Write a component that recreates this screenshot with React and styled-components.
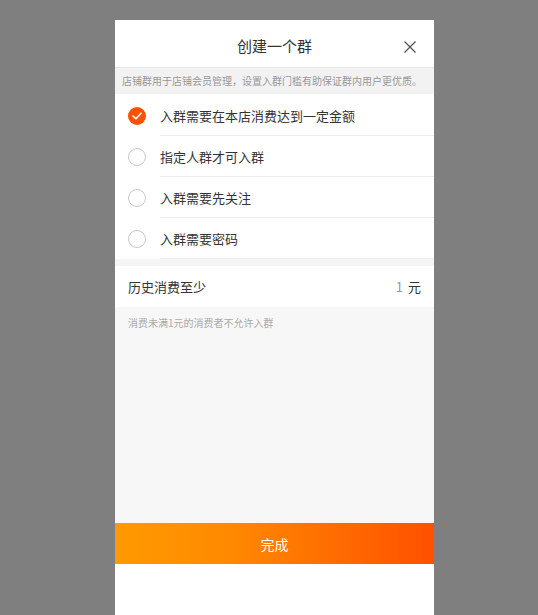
import React from "react";
import styled, { createGlobalStyle } from "styled-components";

const GlobalStyle = createGlobalStyle`
  html, body {
    margin: 0;
    padding: 0;
    background: #7f7f80;
    font-family: "Noto Sans CJK SC", "Noto Sans", sans-serif;
  }
`;

const Backdrop = styled.div`
  height: 615px;
  padding-top: 20px;
  padding-left: 115px;
  box-sizing: border-box;
  overflow: hidden;
`;

const Panel = styled.div`
  width: 319px;
  height: 595px;
  background: #fff;
  display: flex;
  flex-direction: column;
`;

const Header = styled.div`
  height: 48px;
  box-sizing: border-box;
  padding-top: 4px;
  border-bottom: 1px solid #e6e6e6;
  display: flex;
  align-items: center;
  justify-content: center;
  position: relative;
  flex-shrink: 0;
`;

const Title = styled.div`
  font-size: 15px;
  color: #333;
`;

const Close = styled.button`
  position: absolute;
  right: 18px;
  top: 21px;
  border: 0;
  padding: 0;
  background: none;
  width: 12px;
  height: 12px;
  display: flex;
`;

const Notice = styled.div`
  height: 26px;
  line-height: 26px;
  background: #f2f2f2;
  color: #999;
  font-size: 10px;
  padding-left: 7px;
  white-space: nowrap;
  overflow: hidden;
  flex-shrink: 0;
`;

const OptionList = styled.div`
  flex-shrink: 0;
  padding-top: 1px;
`;

const Option = styled.div`
  display: flex;
  align-items: center;
  height: 41px;
  padding-left: 13px;
`;

const Radio = styled.span`
  width: 18px;
  height: 18px;
  border-radius: 50%;
  box-sizing: border-box;
  border: ${(p) => (p.$checked ? "none" : "1px solid #c8c8c8")};
  background: ${(p) => (p.$checked ? "#ff5000" : "#fff")};
  display: flex;
  align-items: center;
  justify-content: center;
  flex-shrink: 0;
  margin-right: 14px;
`;

const OptionLabel = styled.div`
  flex: 1;
  height: 100%;
  box-sizing: border-box;
  display: flex;
  align-items: center;
  font-size: 13px;
  color: #333;
  border-bottom: 1px solid #eeeeee;
`;

const Gap = styled.div`
  height: 7px;
  background: #f5f5f5;
  flex-shrink: 0;
`;

const AmountRow = styled.div`
  height: 41px;
  display: flex;
  align-items: center;
  justify-content: space-between;
  padding: 0 13px;
  font-size: 13px;
  color: #333;
  flex-shrink: 0;
`;

const Amount = styled.div`
  display: flex;
  align-items: center;
  gap: 5px;
`;

const AmountNum = styled.span`
  color: #999;
`;

const HintArea = styled.div`
  flex: 1;
  background: #f7f7f7;
  padding: 8px 13px;
  font-size: 10px;
  color: #aaa;
`;

const Submit = styled.button`
  height: 41px;
  border: 0;
  width: 100%;
  background: linear-gradient(90deg, #ff9a00 0%, #ff8a00 35%, #ff5000 100%);
  color: #fff;
  font-family: inherit;
  font-size: 14px;
  flex-shrink: 0;
`;

const Footer = styled.div`
  height: 51px;
  background: #fff;
  flex-shrink: 0;
`;

const options = [
  "入群需要在本店消费达到一定金额",
  "指定人群才可入群",
  "入群需要先关注",
  "入群需要密码",
];

export default function App() {
  const [selected, setSelected] = React.useState(0);

  return (
    <>
      <GlobalStyle />
      <Backdrop>
        <Panel>
          <Header>
            <Title>创建一个群</Title>
            <Close aria-label="close">
              <svg width="12" height="12" viewBox="0 0 12 12">
                <path d="M0.5 0.5L11.5 11.5M11.5 0.5L0.5 11.5" stroke="#555" strokeWidth="1.3" />
              </svg>
            </Close>
          </Header>
          <Notice>店铺群用于店铺会员管理，设置入群门槛有助保证群内用户更优质。</Notice>
          <OptionList>
            {options.map((text, i) => (
              <Option key={text} onClick={() => setSelected(i)}>
                <Radio $checked={selected === i}>
                  {selected === i && (
                    <svg width="10" height="8" viewBox="0 0 10 8">
                      <path
                        d="M1 4L4 6.8L9 1.2"
                        fill="none"
                        stroke="#fff"
                        strokeWidth="1.6"
                        strokeLinecap="round"
                        strokeLinejoin="round"
                      />
                    </svg>
                  )}
                </Radio>
                <OptionLabel>{text}</OptionLabel>
              </Option>
            ))}
          </OptionList>
          <Gap />
          <AmountRow>
            <span>历史消费至少</span>
            <Amount>
              <AmountNum>1</AmountNum>
              <span>元</span>
            </Amount>
          </AmountRow>
          <HintArea>消费未满1元的消费者不允许入群</HintArea>
          <Submit>完成</Submit>
          <Footer />
        </Panel>
      </Backdrop>
    </>
  );
}
